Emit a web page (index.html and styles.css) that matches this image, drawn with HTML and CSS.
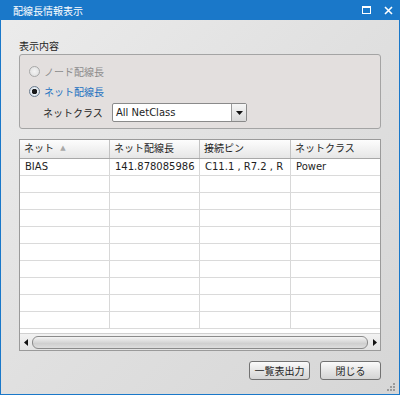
FILE: index.html
```html
<!DOCTYPE html>
<html>
<head>
  <meta charset="utf-8">
  <title>配線長情報表示</title>
  <link rel="stylesheet" href="styles.css">
</head>
<body>
  <div class="window">
    <div class="titlebar">
      <span class="title">配線長情報表示</span>
      <div class="title-buttons">
        <svg width="9" height="8" viewBox="0 0 9 8"><rect x="0.5" y="0.5" width="8" height="7" fill="none" stroke="#fff"/><rect x="0" y="0" width="9" height="2" fill="#fff"/></svg>
        <svg width="9" height="9" viewBox="0 0 9 9"><path d="M1 1 L8 8 M8 1 L1 8" stroke="#fff" stroke-width="1.6"/></svg>
      </div>
    </div>

    <div class="content">
      <div class="section-label">表示内容</div>
      <div class="group">
        <div class="radio disabled"><span class="radio-dot"></span>ノード配線長</div>
        <div class="radio checked"><span class="radio-dot"></span>ネット配線長</div>
        <div class="netclass-row">
          <span class="netclass-label">ネットクラス</span>
          <div class="select">
            <span class="select-value">All NetClass</span>
            <span class="select-btn">
              <svg width="7" height="4" viewBox="0 0 7 4"><path d="M0 0 H7 L3.5 4 Z" fill="#111"/></svg>
            </span>
          </div>
        </div>
      </div>

      <div class="grid">
        <div class="grid-head">
          <div class="cell">ネット <span class="sort">▲</span></div>
          <div class="cell">ネット配線長</div>
          <div class="cell">接続ピン</div>
          <div class="cell">ネットクラス</div>
        </div>
        <div class="grid-body">
          <div class="row">
            <div class="cell">BIAS</div>
            <div class="cell">141.878085986</div>
            <div class="cell">C11.1 , R7.2 , R</div>
            <div class="cell">Power</div>
          </div>
          <div class="row"><div class="cell"></div><div class="cell"></div><div class="cell"></div><div class="cell"></div></div>
          <div class="row"><div class="cell"></div><div class="cell"></div><div class="cell"></div><div class="cell"></div></div>
          <div class="row"><div class="cell"></div><div class="cell"></div><div class="cell"></div><div class="cell"></div></div>
          <div class="row"><div class="cell"></div><div class="cell"></div><div class="cell"></div><div class="cell"></div></div>
          <div class="row"><div class="cell"></div><div class="cell"></div><div class="cell"></div><div class="cell"></div></div>
          <div class="row"><div class="cell"></div><div class="cell"></div><div class="cell"></div><div class="cell"></div></div>
          <div class="row"><div class="cell"></div><div class="cell"></div><div class="cell"></div><div class="cell"></div></div>
          <div class="row"><div class="cell"></div><div class="cell"></div><div class="cell"></div><div class="cell"></div></div>
          <div class="row"><div class="cell"></div><div class="cell"></div><div class="cell"></div><div class="cell"></div></div>
        </div>
        <div class="hscroll">
          <span class="arrow"><svg width="4" height="7" viewBox="0 0 4 7"><path d="M4 0 V7 L0 3.5 Z" fill="#111"/></svg></span>
          <div class="thumb"></div>
          <span class="arrow"><svg width="4" height="7" viewBox="0 0 4 7"><path d="M0 0 V7 L4 3.5 Z" fill="#111"/></svg></span>
        </div>
      </div>

      <div class="actions">
        <button class="btn">一覧表出力</button>
        <button class="btn">閉じる</button>
      </div>
    </div>

    <svg class="grip" width="9" height="9" viewBox="0 0 9 9">
      <rect x="7" y="1" width="2" height="2" fill="#9a9a9a"/>
      <rect x="4" y="4" width="2" height="2" fill="#9a9a9a"/>
      <rect x="7" y="4" width="2" height="2" fill="#9a9a9a"/>
      <rect x="1" y="7" width="2" height="2" fill="#9a9a9a"/>
      <rect x="4" y="7" width="2" height="2" fill="#9a9a9a"/>
      <rect x="7" y="7" width="2" height="2" fill="#9a9a9a"/>
    </svg>
  </div>
</body>
</html>
```

FILE: styles.css
```css
/* ダイアログ全体 */
body {
    margin: 0;
    font-family: "DejaVu Sans", "Noto Sans CJK JP", sans-serif;
    font-size: 10px;
    color: #1e1e1e;
}

.window {
    position: relative;
    width: 400px;
    height: 395px;
    box-sizing: border-box;
    border: 1px solid #1a78c9;
    border-top: none;
    display: flex;
    flex-direction: column;
    background: linear-gradient(135deg, #ececec 0%, #e0e0e0 50%, #d6d6d6 100%);
}

.titlebar {
    height: 20px;
    margin: 0 -1px;
    background: #1a78c9;
    display: flex;
    align-items: center;
    justify-content: space-between;
    padding: 0 7px 0 13px;
    flex-shrink: 0;
}

.title {
    color: #fff;
    font-size: 10px;
}

.title-buttons {
    display: flex;
    align-items: center;
    gap: 13px;
}

.title-buttons svg {
    display: block;
}

.content {
    padding: 19px 18px 0 18px;
    display: flex;
    flex-direction: column;
}

.section-label {
    line-height: 15px;
}

/* 表示内容グループ */
.group {
    height: 75px;
    box-sizing: border-box;
    border: 1px solid #a4a4a4;
    border-radius: 3px;
    background: #e3dfde;
    padding: 6px 8px 0 9px;
}

.radio {
    display: flex;
    align-items: center;
    gap: 4px;
    height: 20px;
}

.radio.disabled {
    color: #8c8c8c;
}

.radio.checked {
    color: #1a70c0;
}

.radio-dot {
    width: 9px;
    height: 9px;
    border: 1px solid #a8a8a8;
    border-radius: 50%;
    background: radial-gradient(circle, #f4f4f4 0%, #dcdcdc 100%);
    display: inline-block;
}

.radio.checked .radio-dot {
    border-color: #6a7c8f;
    background: radial-gradient(circle, #1a1a1a 0, #1a1a1a 2.5px, #e8eef4 3px, #c8d2dc 100%);
}

.netclass-row {
    display: flex;
    align-items: center;
    margin-top: 2px;
    padding-left: 14px;
}

.netclass-label {
    width: 69px;
}

.select {
    width: 135px;
    height: 19px;
    box-sizing: border-box;
    border: 1px solid #8a8a8a;
    border-radius: 2px;
    background: #fff;
    display: flex;
    align-items: center;
}

.select-value {
    flex: 1;
    padding-left: 3px;
}

.select-btn {
    width: 14px;
    height: 17px;
    border-left: 1px solid #9a9a9a;
    background: linear-gradient(#f6f6f6, #d8d8d8);
    display: flex;
    align-items: center;
    justify-content: center;
}

/* 一覧表 */
.grid {
    margin-top: 10px;
    border: 1px solid #9a9a9a;
    background: #fff;
}

.grid-head,
.row {
    display: grid;
    grid-template-columns: 90px 90px 91px 89px;
}

.grid-head {
    height: 18px;
    border-bottom: 1px solid #a8a8a8;
    background: linear-gradient(#fdfdfd, #e6e6e6);
}

.grid-head .cell {
    border-right: 1px solid #c2c2c2;
    padding-left: 4px;
    line-height: 17px;
    white-space: nowrap;
}

.sort {
    color: #a8a8a8;
    font-size: 7px;
    margin-left: 3px;
    vertical-align: 2px;
}

.grid-body {
    height: 174px;
}

.row {
    height: 17px;
    box-sizing: border-box;
    border-bottom: 1px solid #dadada;
}

.row .cell {
    border-right: 1px solid #d8d8d8;
    padding-left: 5px;
    line-height: 16px;
    white-space: nowrap;
    overflow: hidden;
}

.grid-head .cell:last-child,
.row .cell:last-child {
    border-right: none;
}

.hscroll {
    height: 16px;
    display: flex;
    align-items: center;
    background: linear-gradient(#f2f2f2, #e2e2e2);
    border-top: 1px solid #d0d0d0;
}

.arrow {
    width: 11px;
    display: flex;
    justify-content: center;
}

.thumb {
    flex: 1;
    height: 11px;
    margin: 0 1px;
    border: 1px solid #8a8a8a;
    border-radius: 6px;
    background: linear-gradient(#f4f4f4, #cfcfcf 60%, #dedede);
}

/* ボタン */
.actions {
    display: flex;
    justify-content: flex-end;
    gap: 10px;
    margin-top: 10px;
}

.btn {
    width: 61px;
    height: 19px;
    box-sizing: border-box;
    border: 1px solid #727272;
    border-radius: 3px;
    background: linear-gradient(#fbfbfb, #e6e6e6 50%, #d4d4d4);
    font-family: inherit;
    font-size: 10px;
    color: #1e1e1e;
    padding: 0;
}

.grip {
    position: absolute;
    right: 4px;
    bottom: 3px;
}
```
